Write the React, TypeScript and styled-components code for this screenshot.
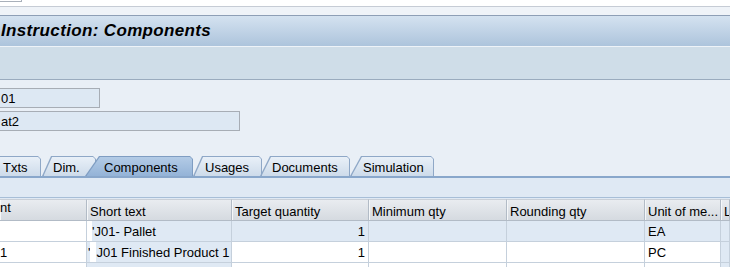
import React from "react";
import styled, { createGlobalStyle } from "styled-components";

const GlobalStyle = createGlobalStyle`
  html, body { margin: 0; padding: 0; width: 730px; height: 267px; overflow: hidden; background: #e9eff6; }
  body { font-family: "Liberation Sans", Arial, sans-serif; font-size: 13px; color: #000; }
  * { box-sizing: border-box; }
`;

const Screen = styled.div`
  display: flex;
  flex-direction: column;
  width: 730px;
  min-height: 267px;
  background: #e9eff6;
  & > * { flex: none; }
`;

const TopStrip = styled.div`
  height: 7px;
  background: #ffffff;
  border-bottom: 1px solid #c6ccd5;
`;

const TinyField = styled.div`
  width: 22px;
  height: 2px;
  background: #ffffff;
  border-right: 1px solid #a9b0ba;
  border-bottom: 1px solid #a9b0ba;
`;

const SubStrip = styled.div`
  height: 9px;
  background: #eff3f8;
  border-bottom: 1px solid #8e9fb6;
`;

const TitleBar = styled.div`
  height: 30px;
  padding: 5px 0 0 1px;
  background: linear-gradient(#d4e2f0, #adc4dc);
  font-family: "Liberation Sans", Arial, sans-serif;
  font-weight: bold;
  font-style: italic;
  font-size: 17px;
  letter-spacing: 0.35px;
  white-space: nowrap;
`;

const ToolBand = styled.div`
  height: 34px;
  background: #cfdde8;
  border-top: 1px solid #eef3f8;
  border-bottom: 1px solid #9aabbe;
`;

const Body = styled.div`
  display: flex;
  flex-direction: column;
  padding-top: 8px;
  & > * { flex: none; }
`;

const Fields = styled.div`
  display: flex;
  flex-direction: column;
  gap: 3px;
`;

const Field = styled.div<{ $w: number }>`
  width: ${(p) => p.$w}px;
  height: 20px;
  margin-left: -2px;
  padding: 2px 0 0 2px;
  background: #dde8f3;
  border: 1px solid #a7adb5;
  white-space: nowrap;
  overflow: hidden;
`;

const TabStrip = styled.div`
  display: flex;
  align-items: flex-end;
  height: 22px;
  margin-top: 25px;
  border-bottom: 2px solid #89a7cb;
`;

const Tab = styled.div<{ $active?: boolean; $w: number; $ml: number; $pl: number; $slant: number; $z: number }>`
  position: relative;
  flex: none;
  width: ${(p) => p.$w}px;
  height: 20px;
  margin-left: ${(p) => p.$ml}px;
  padding: 4px 0 0 ${(p) => p.$pl}px;
  z-index: ${(p) => p.$z};
  white-space: nowrap;
  &::before {
    content: "";
    position: absolute;
    inset: 0;
    background: ${(p) => (p.$active ? "#7f9dc2" : "#8fa8c7")};
    clip-path: polygon(0 100%, ${(p) => p.$slant}px 0, calc(100% - 3px) 0, 100% 3px, 100% 100%);
  }
  &::after {
    content: "";
    position: absolute;
    top: 1px;
    left: 1.5px;
    right: 1px;
    bottom: 0;
    background: ${(p) =>
      p.$active ? "linear-gradient(#b3cbe6, #94b3d7)" : "linear-gradient(#e9f0f8, #cddbea)"};
    clip-path: polygon(0 100%, ${(p) => p.$slant * 0.95}px 0, calc(100% - 2px) 0, 100% 2px, 100% 100%);
  }
`;

const TabLabel = styled.span`
  position: relative;
  z-index: 1;
`;

const PanelStrip = styled.div`
  height: 20px;
  background: #dfe9f4;
  border-bottom: 1px solid #a7bed7;
`;

const Table = styled.div`
  display: grid;
  grid-template-columns: 87px 145px 137px 138px 138px 76px 1fr;
  padding-top: 1px;
  background: #dfe9f4;
`;

const HeadCell = styled.div<{ $shift?: number }>`
  height: 22px;
  padding: 4px 0 0 ${(p) => 3 + (p.$shift ?? 0)}px;
  background: linear-gradient(#e9ecf0, #d5dae0);
  border-top: 1px solid #c9cfd7;
  border-right: 1px solid #b2bbc6;
  border-bottom: 1px solid #b2bbc6;
  box-shadow: inset 1px 0 0 #f5f7f9;
  white-space: nowrap;
  overflow: hidden;
`;

const Cell = styled.div<{ $tone: "white" | "blue"; $right?: boolean; $pl?: number }>`
  display: flex;
  align-items: center;
  justify-content: ${(p) => (p.$right ? "flex-end" : "flex-start")};
  height: 21px;
  padding: 0 ${(p) => (p.$right ? 3 : 0)}px 0 ${(p) => p.$pl ?? 3}px;
  background: ${(p) => (p.$tone === "white" ? "#ffffff" : "#dfe9f4")};
  border-right: 1px solid #c5d0dc;
  border-bottom: 1px solid #c5d0dc;
  white-space: nowrap;
  overflow: hidden;
`;

const Mask = styled.span<{ $w: number }>`
  display: inline-block;
  flex: none;
  width: ${(p) => p.$w}px;
  height: 20px;
  background: #ffffff;
`;

const tabs = [
  { label: "Txts", w: 53, ml: -12, pl: 15, slant: 9, z: 1 },
  { label: "Dim.", w: 54, ml: 1, pl: 11, slant: 9, z: 2 },
  { label: "Components", w: 108, ml: -11, pl: 19, slant: 14, z: 10, active: true },
  { label: "Usages", w: 69, ml: 0, pl: 12, slant: 9, z: 3 },
  { label: "Documents", w: 90, ml: -2, pl: 12, slant: 10, z: 4 },
  { label: "Simulation", w: 84, ml: 0, pl: 13, slant: 11, z: 5 },
];

export default function App() {
  return (
    <Screen>
      <GlobalStyle />
      <TopStrip>
        <TinyField />
      </TopStrip>
      <SubStrip />
      <TitleBar>Instruction: Components</TitleBar>
      <ToolBand />
      <Body>
        <Fields>
          <Field $w={102}>01</Field>
          <Field $w={242}>at2</Field>
        </Fields>
        <TabStrip>
          {tabs.map((t) => (
            <Tab key={t.label} $active={t.active} $w={t.w} $ml={t.ml} $pl={t.pl} $slant={t.slant} $z={t.z}>
              <TabLabel>{t.label}</TabLabel>
            </Tab>
          ))}
        </TabStrip>
        <PanelStrip />
        <Table>
          <HeadCell $shift={-6}>nt</HeadCell>
          <HeadCell>Short text</HeadCell>
          <HeadCell>Target quantity</HeadCell>
          <HeadCell>Minimum qty</HeadCell>
          <HeadCell>Rounding qty</HeadCell>
          <HeadCell>Unit of me...</HeadCell>
          <HeadCell>Le</HeadCell>

          <Cell $tone="white" />
          <Cell $tone="blue" $pl={0}>
            <Mask $w={5} />
            'J01- Pallet
          </Cell>
          <Cell $tone="blue" $right>1</Cell>
          <Cell $tone="blue" />
          <Cell $tone="blue" />
          <Cell $tone="blue">EA</Cell>
          <Cell $tone="blue" />

          <Cell $tone="white" $pl={0}>1</Cell>
          <Cell $tone="blue" $pl={1}>
            '
            <Mask $w={6} />
            J01 Finished Product 1
          </Cell>
          <Cell $tone="white" $right>1</Cell>
          <Cell $tone="white" />
          <Cell $tone="white" />
          <Cell $tone="white">PC</Cell>
          <Cell $tone="blue" />

          <Cell $tone="white" />
          <Cell $tone="blue" />
          <Cell $tone="white" />
          <Cell $tone="white" />
          <Cell $tone="white" />
          <Cell $tone="white" />
          <Cell $tone="blue" />
        </Table>
      </Body>
    </Screen>
  );
}
